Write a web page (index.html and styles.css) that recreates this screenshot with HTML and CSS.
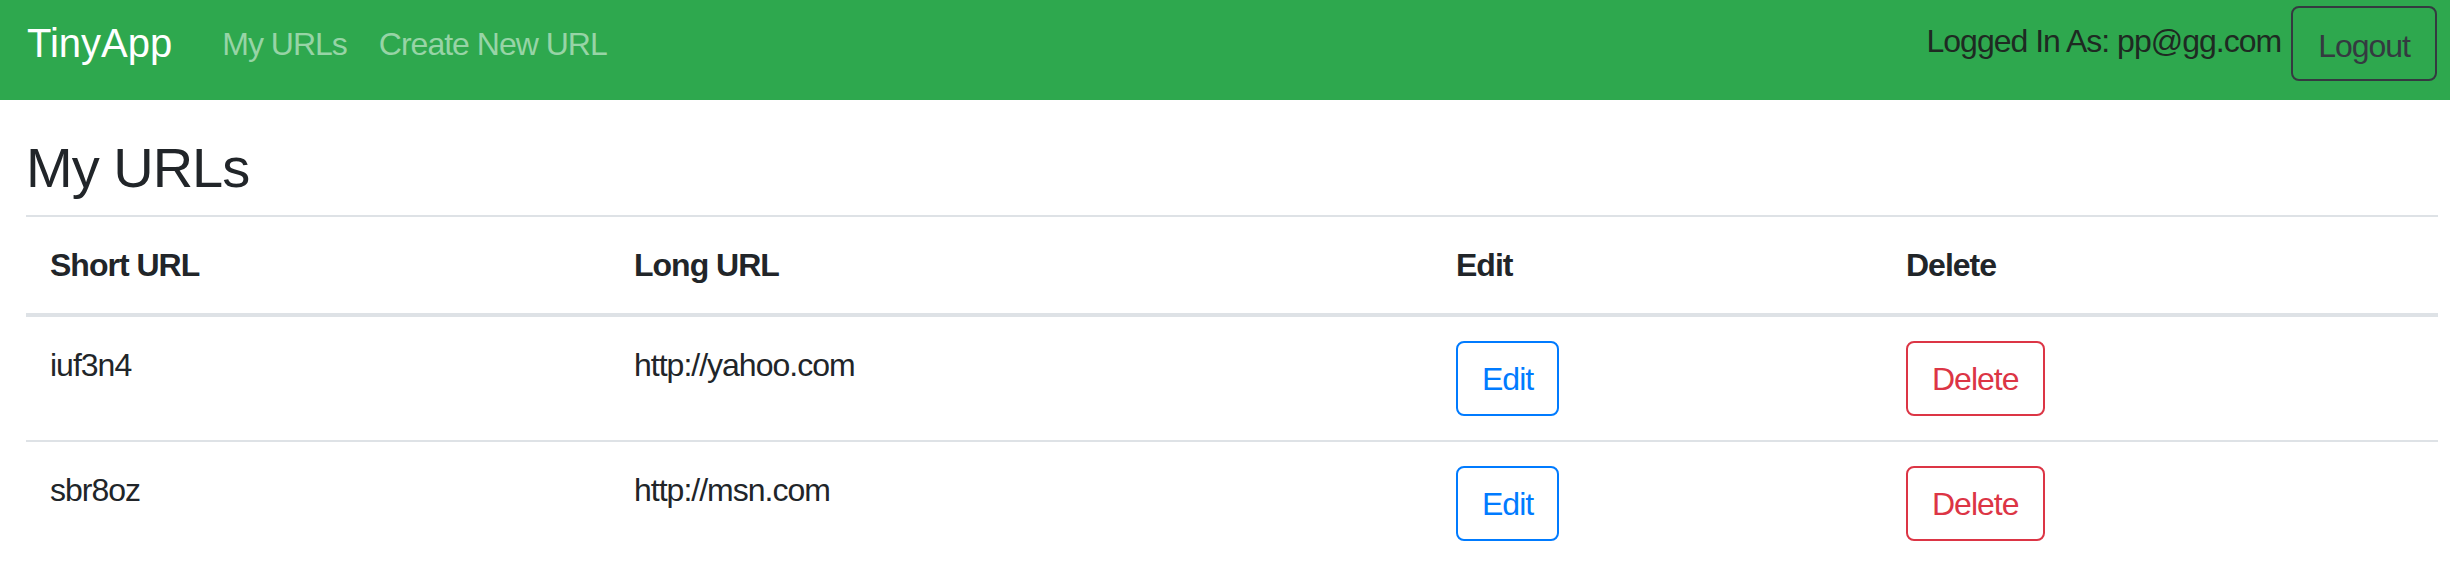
FILE: index.html
```html
<!DOCTYPE html>
<html lang="en">
<head>
<meta charset="utf-8">
<title>TinyApp</title>
<link rel="stylesheet" href="styles.css">
</head>
<body>
<nav class="navbar">
  <a class="brand" href="#">TinyApp</a>
  <div class="nav-links">
    <a class="nav-link" href="#">My URLs</a>
    <a class="nav-link" href="#">Create New URL</a>
  </div>
  <div class="user">
    <span class="user-label">Logged In As: pp@gg.com</span>
    <button class="btn btn-dark-outline" type="button">Logout</button>
  </div>
</nav>
<main class="container">
  <h1 class="title">My URLs</h1>
  <table class="table">
    <colgroup>
      <col class="c1"><col class="c2"><col class="c3"><col class="c4">
    </colgroup>
    <thead>
      <tr><th>Short URL</th><th>Long URL</th><th>Edit</th><th>Delete</th></tr>
    </thead>
    <tbody>
      <tr>
        <td>iuf3n4</td>
        <td>http://yahoo.com</td>
        <td><button class="btn btn-blue" type="button">Edit</button></td>
        <td><button class="btn btn-red" type="button">Delete</button></td>
      </tr>
      <tr>
        <td>sbr8oz</td>
        <td>http://msn.com</td>
        <td><button class="btn btn-blue" type="button">Edit</button></td>
        <td><button class="btn btn-red" type="button">Delete</button></td>
      </tr>
    </tbody>
  </table>
</main>
</body>
</html>
```
FILE: styles.css
```css
* { box-sizing: border-box; }
html, body { margin: 0; padding: 0; background: #fff; }
body {
  font-family: "Liberation Sans", Arial, sans-serif;
  color: #212529;
  font-size: 32px;
  letter-spacing: -1px;
}
.navbar {
  height: 100px;
  background: #2ea84e;
  display: flex;
  align-items: flex-start;
  padding: 0 13px 0 27px;
}
.brand {
  font-size: 40px;
  line-height: 60px;
  letter-spacing: 0;
  color: #fff;
  text-decoration: none;
  margin-top: 13px;
  margin-right: 50px;
}
.nav-links {
  display: flex;
  gap: 32px;
  margin-top: 20px;
}
.nav-link {
  font-size: 32px;
  line-height: 48px;
  color: #97d4a6;
  text-decoration: none;
}
.user {
  margin-left: auto;
  display: flex;
  align-items: flex-start;
}
.user-label {
  font-size: 32px;
  line-height: 48px;
  margin-top: 17px;
  margin-right: 10px;
  color: #1e2a22;
}
.btn {
  font-family: "Liberation Sans", Arial, sans-serif;
  font-size: 32px;
  letter-spacing: -1px;
  background: transparent;
  border: 2px solid;
  border-radius: 8px;
  cursor: pointer;
}
.btn-dark-outline {
  margin-top: 6px;
  height: 75px;
  padding: 16px 25px 11px 25px;
  line-height: 44px;
  color: #343a40;
  border-color: #343a40;
}
.container {
  padding: 0 12px 0 26px;
}
.title {
  font-size: 56px;
  font-weight: 400;
  line-height: 67px;
  margin: 34px 0 14px 0;
  color: #212529;
}
.table {
  width: 100%;
  border-collapse: collapse;
  table-layout: fixed;
}
.c1 { width: 584px; }
.c2 { width: 822px; }
.c3 { width: 450px; }
.c4 { width: 556px; }
.table th, .table td {
  text-align: left;
  vertical-align: top;
  padding: 24px;
  line-height: 48px;
  font-size: 32px;
  border-top: 2px solid #dee2e6;
}
.table th {
  font-weight: 700;
  border-bottom: 4px solid #dee2e6;
}
.table td .btn {
  height: 75px;
  padding: 12px 24px 11px 24px;
  line-height: 48px;
  display: block;
}
.btn-blue { color: #007bff; border-color: #007bff; }
.btn-red { color: #dc3545; border-color: #dc3545; }
```
